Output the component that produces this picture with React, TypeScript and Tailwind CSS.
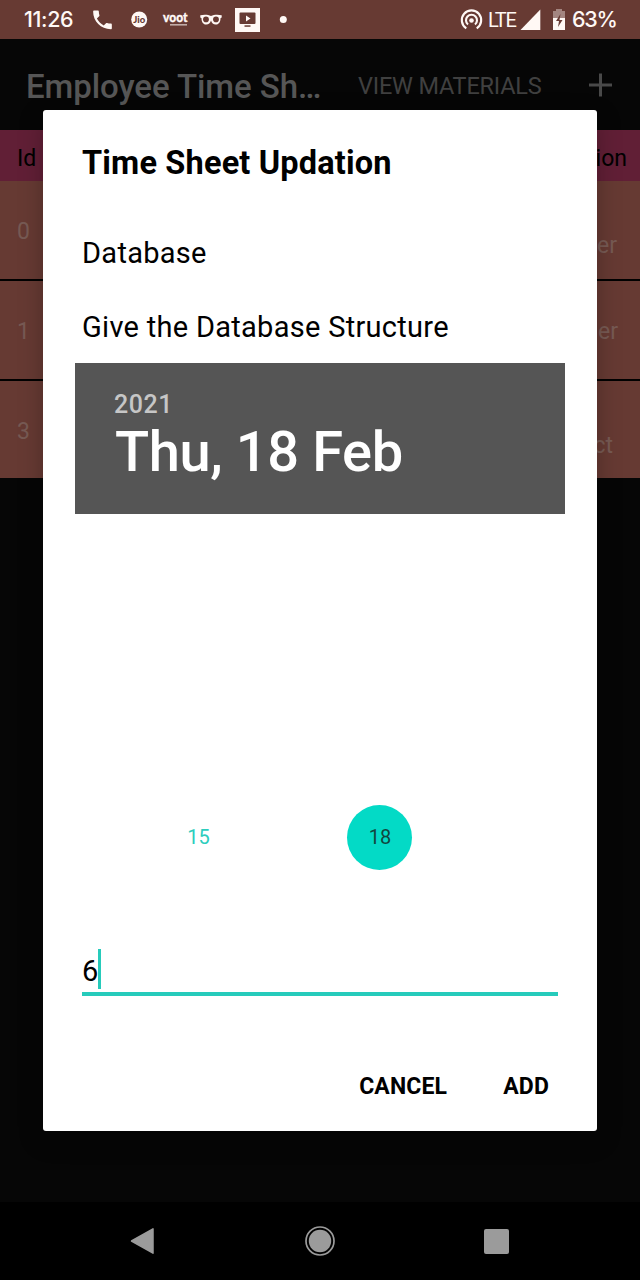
import React from "react";

const rows = [
  { id: "0", tail: "er", height: "h-[98px]", tailPos: "pr-[23px] mt-[32px]" },
  { id: "1", tail: "er", height: "h-[98px]", tailPos: "pr-[22px] mt-[4px]" },
  { id: "3", tail: "ct", height: "h-[97px]", tailPos: "pr-[27px] mt-[32px]" },
];

function StatusBar() {
  return (
    <header className="flex h-[39px] items-center justify-between bg-[#673a33] text-[#fff8f5]">
      <div className="flex items-center pl-[24px]">
        <span className="w-[66px] whitespace-nowrap font-[Inter] text-[21.5px] leading-[39px] font-medium tracking-[-0.4px]">11:26</span>
        <svg className="h-[39px] w-[210px]" viewBox="90 0 210 39" fill="#fff8f5">
          <path transform="translate(90 7.400) scale(1.040)" d="M6.620 10.790c1.440 2.830 3.760 5.140 6.590 6.590l2.200-2.200c.27-.27.67-.36 1.020-.24 1.120.37 2.330.57 3.570.57.55 0 1 .45 1 1V20c0 .55-.45 1-1 1-9.390 0-17-7.610-17-17 0-.55.45-1 1-1h3.500c.55 0 1 .45 1 1 0 1.250.2 2.450.57 3.570.11.35.03.74-.25 1.020l-2.200 2.200z" />
          <circle cx="139.200" cy="19.500" r="8" />
          <text x="139.200" y="23" textAnchor="middle" fontFamily="Lato" fontWeight="900" fontSize="9.500" fill="#673a33">Jio</text>
          <text x="163" y="22.300" fontFamily="Lato" fontWeight="900" fontSize="13.500" textLength="24.500" lengthAdjust="spacingAndGlyphs" stroke="#fff8f5" strokeWidth=".3">voot</text>
          <path d="M170 24h17v1.600h-17z" opacity=".6" />
          <path d="M200.300 15.200c4-.9 8-.6 10.700.8 2.700-1.400 6.700-1.700 10.700-.8v2.400l-1.200.6c0 4-1.900 6.300-4.800 6.300-2.400 0-3.900-1.500-4.700-4-.8 2.500-2.300 4-4.700 4-2.900 0-4.800-2.300-4.800-6.300l-1.200-.6z" />
          <ellipse cx="206" cy="19.400" rx="2.900" ry="2.800" fill="#673a33" />
          <ellipse cx="216" cy="19.400" rx="2.900" ry="2.800" fill="#673a33" />
          <path d="M235 8h25v24h-25z" />
          <rect x="239.500" y="12.500" width="16" height="11.500" rx="1" fill="#673a33" />
          <path d="M246 15.500l4.500 3-4.500 3z" />
          <path d="M244.500 25.300h6v1.500h-6z" fill="#673a33" />
          <circle cx="283.300" cy="19.600" r="3.500" />
        </svg>
      </div>
      <div className="flex items-center pr-[23px]">
        <svg className="h-[39px] w-[28px]" viewBox="457 0 28 39" fill="none" stroke="#fff8f5" strokeWidth="2.100">
          <path d="M465.300 28.300A9.700 9.700 0 1 1 475.700 28.300" />
          <path d="M467 24.500A5.500 5.500 0 1 1 474 24.500" />
          <circle cx="470.500" cy="20.500" r="2.300" fill="#fff8f5" stroke="none" />
        </svg>
        <span className="w-[32px] pt-[1px] pl-[2px] whitespace-nowrap font-[Roboto] text-[20px] leading-[39px] tracking-[-1.3px]">LTE</span>
        <svg className="h-[39px] w-[53px]" viewBox="517 0 53 39" fill="#fff8f5">
          <path d="M519.500 30L539.300 9.500V30z" />
          <path d="M555 9h6v2h3v8h-12v-8h3z" opacity=".4" />
          <path d="M552 18h12v12h-12z" />
          <path d="M559.500 14l-4.500 7h3l-1 6 4.500-7h-3z" fill="#673a33" />
        </svg>
        <span className="w-[46px] pl-[1px] whitespace-nowrap font-[Inter] text-[21.5px] leading-[39px] font-medium tracking-[-1.3px]">63%</span>
      </div>
    </header>
  );
}

function ActionBar() {
  return (
    <div className="flex h-[91px] items-center pl-[26px] text-[#565656]">
      <h1 className="w-[331px] whitespace-nowrap pt-[4px] text-[33px] leading-[40px] font-medium tracking-[-0.07px]">Employee Time Sh…</h1>
      <span className="w-[231px] whitespace-nowrap pt-[4px] pl-[1px] text-[23.5px] tracking-[-0.2px] text-[#404040]">VIEW MATERIALS</span>
      <svg className="h-[24px] w-[24px]" viewBox="0 0 24 24" fill="none" stroke="#494949" strokeWidth="3">
        <path d="M12.500 .5v23M1 12h23" />
      </svg>
    </div>
  );
}

function Table() {
  return (
    <section className="text-[23px] leading-[28px]">
      <div className="flex h-[51px] items-center justify-between bg-[#611f36] pt-[6px] pr-[13px] pl-[17px] text-black">
        <span>Id</span>
        <span>ion</span>
      </div>
      <div className="flex flex-col gap-[2px] bg-black text-[#775a54]">
        {rows.map((row) => (
          <div key={row.id} className={`flex items-center justify-between bg-[#663a33] pl-[17px] ${row.height}`}>
            <span className="mt-[4px]">{row.id}</span>
            <span className={row.tailPos}>{row.tail}</span>
          </div>
        ))}
      </div>
    </section>
  );
}

function Dialog() {
  return (
    <div className="absolute top-[110px] left-[43px] flex h-[1021px] w-[554px] flex-col rounded-[3px] bg-white text-black shadow-[0_8px_24px_rgba(0,0,0,0.25)]">
      <h2 className="mt-[33px] ml-[39px] h-[40px] whitespace-nowrap text-[32.5px] leading-[40px] font-bold tracking-[0.17px]">Time Sheet Updation</h2>
      <p className="mt-[50px] ml-[39px] h-[40px] whitespace-nowrap text-[29px] leading-[40px] tracking-[0.29px]">Database</p>
      <p className="mt-[34px] ml-[39px] h-[40px] whitespace-nowrap text-[29px] leading-[40px] tracking-[0.29px]">Give the Database Structure</p>
      <div className="mx-[32px] mt-[16px] flex h-[151px] flex-col bg-[#555555] pl-[39px]">
        <span className="mt-[27px] h-[29px] text-[25px] leading-[30px] font-medium tracking-[0.5px] text-[#c6c6c6]">2021</span>
        <span className="ml-[1px] h-[66px] whitespace-nowrap text-[56px] leading-[66px] font-medium tracking-[-0.4px] text-white">Thu, 18 Feb</span>
      </div>
      <div className="mt-[291px] flex h-[65px] items-center text-[20px]">
        <span className="ml-[123px] w-[65px] pb-[1px] text-center text-[#2dcdbd]">15</span>
        <span className="ml-[116px] flex h-[65px] w-[65px] items-center justify-center rounded-full bg-[#03dac6] pb-[2px] pl-[1px] text-[#12473f]">18</span>
      </div>
      <div className="mx-[39px] mt-[79px] flex h-[47px] border-b-[4px] border-[#26cbbb] text-[29px]">
        <span className="pt-[2px] leading-[40px]">6</span>
        <span className="h-[40px] w-[3px] bg-[#26cbbb]" />
      </div>
      <div className="mt-[75px] mr-[48px] flex justify-end gap-[56px] text-[23px] leading-[32px] font-bold">
        <button className="font-bold tracking-[0.15px]">CANCEL</button>
        <button className="font-bold tracking-[0.15px]">ADD</button>
      </div>
    </div>
  );
}

function NavBar() {
  return (
    <nav className="flex h-[78px] items-center bg-black">
      <svg className="ml-[130px] h-[28px] w-[24px]" viewBox="0 0 24 28" fill="#9b9b9b" stroke="#9b9b9b" strokeWidth="1.500" strokeLinejoin="round">
        <path d="M1.500 14L23 1.800v24.400z" />
      </svg>
      <svg className="ml-[151px] h-[30px] w-[30px]" viewBox="0 0 30 30" fill="#9b9b9b">
        <circle cx="15" cy="15" r="11.200" />
        <circle cx="15" cy="15" r="14" fill="none" stroke="#9b9b9b" strokeWidth="1.700" />
      </svg>
      <span className="ml-[149px] h-[25px] w-[25px] rounded-[2px] bg-[#9b9b9b]" />
    </nav>
  );
}

export default function App() {
  return (
    <div className="relative flex h-[1280px] w-[640px] flex-col overflow-hidden bg-[#060606] font-[Roboto,sans-serif]">
      <StatusBar />
      <ActionBar />
      <Table />
      <div className="flex-1" />
      <NavBar />
      <Dialog />
    </div>
  );
}
